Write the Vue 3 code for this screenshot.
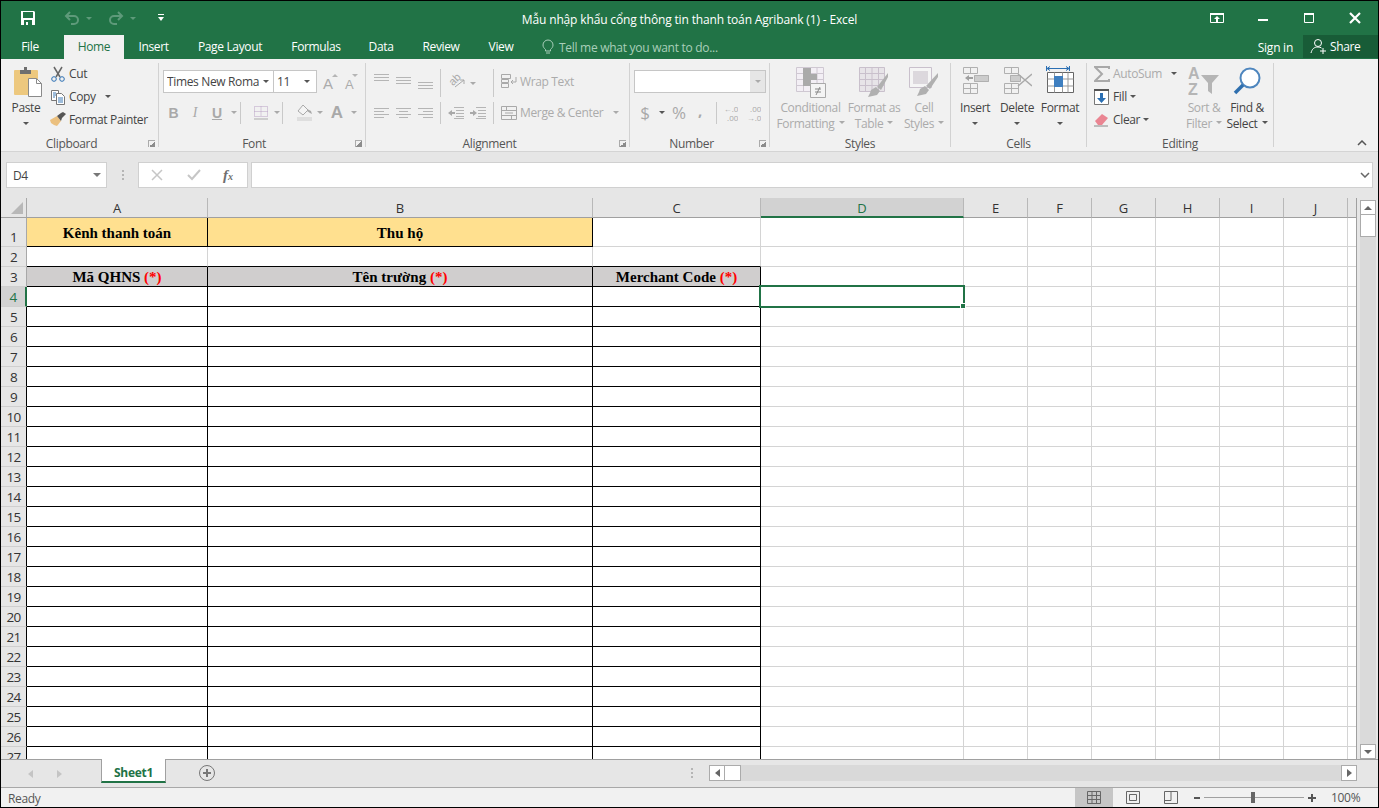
<script setup>
const colW = [181, 385, 168, 203, 64, 64, 64, 64, 64, 64, 8]
const colNames = ['A', 'B', 'C', 'D', 'E', 'F', 'G', 'H', 'I', 'J', '']
const tabs = ['File', 'Home', 'Insert', 'Page Layout', 'Formulas', 'Data', 'Review', 'View']
const gridCols = colW.map(w => w + 'px').join(' ')

const rows = Array.from({ length: 27 }, (_, i) => i + 1)

function cellClass(r, c) {
  const cls = []
  if (r === 1 && c < 2) cls.push('fill-y', 'blk-r', 'blk-b', 'title-cell')
  if (r === 2 && c < 3) cls.push('blk-b')
  if (r >= 3 && c < 3) cls.push('blk-r', 'blk-b')
  if (r === 3 && c < 3) cls.push('fill-g', 'title-cell')
  return cls
}

const cellText = { '1-0': 'Kênh thanh toán', '1-1': 'Thu hộ', '3-0': 'Mã QHNS', '3-1': 'Tên trường', '3-2': 'Merchant Code' }
</script>

<template>
  <div class="win">
    <header class="titlebar">
      <div class="qat">
        <svg width="14" height="14" viewBox="0 0 14 14"><path fill="#fff" d="M0 0h13l1 1v13H0z"/><path fill="#217346" d="M2 1h10v6H2zM3 9h8v5H3z"/><path fill="#fff" d="M5 11h2v3H5z"/></svg>
        <svg class="q-undo" width="16" height="14" viewBox="0 0 16 14"><path d="M6 1L2 5l4 4M2 5h8a4 4 0 0 1 0 8H7" fill="none" stroke="#5e9a7a" stroke-width="2"/></svg>
        <i class="caret dim-caret q-c1"></i>
        <svg class="q-redo" width="16" height="14" viewBox="0 0 16 14"><path d="M10 1l4 4-4 4M14 5H6a4 4 0 0 0 0 8h3" fill="none" stroke="#5e9a7a" stroke-width="2"/></svg>
        <i class="caret dim-caret q-c2"></i>
        <svg class="q-more" width="8" height="8" viewBox="0 0 8 8"><path d="M1 0h6v1H1z M1 3h6L4 7z" fill="#fff"/></svg>
      </div>
      <div class="doc-title">Mẫu nhập khẩu cổng thông tin thanh toán Agribank (1) - Excel</div>
      <div class="winctl">
        <svg width="46" height="34" viewBox="0 0 46 34"><path d="M16.500 12.500h13v9h-13z" fill="none" stroke="#fff"/><path d="M16 12h14v2H16z M23 15l-3 3h2v3h2v-3h2z" fill="#fff"/></svg>
        <svg width="46" height="34" viewBox="0 0 46 34"><path d="M18 18h10v2H18z" fill="#fff"/></svg>
        <svg width="46" height="34" viewBox="0 0 46 34"><path d="M18.500 13.500h9v8h-9z" fill="none" stroke="#fff"/><path d="M18 12h10v2H18z" fill="#fff"/></svg>
        <svg width="46" height="34" viewBox="0 0 46 34"><path d="M18 12l10 10M28 12L18 22" stroke="#fff" stroke-width="2.200" fill="none"/></svg>
      </div>
    </header>

    <nav class="tabs">
      <div v-for="t in tabs" :key="t" class="tab" :class="{ active: t === 'Home', file: t === 'File' }">{{ t }}</div>
      <div class="tellme">
        <svg width="12" height="16" viewBox="0 0 12 16"><path d="M3.500 10.500C2 9 1 8 1 6a5 5 0 0 1 10 0c0 2-1 3-2.500 4.500v1.500h-5zM4 14h4" fill="none" stroke="#a9cfba"/></svg>
        <span>Tell me what you want to do...</span>
      </div>
      <div class="signin">Sign in</div>
      <div class="share">
        <svg width="18" height="17" viewBox="0 0 18 17"><circle cx="8" cy="5" r="3.500" fill="none" stroke="#fff"/><path d="M1 15c1-4 3-6 7-6 1.500 0 2.500.3 3.500 1" fill="none" stroke="#fff"/><path d="M10 13h6M13 10v6" stroke="#fff"/></svg>
        <span>Share</span>
      </div>
    </nav>

    <section class="ribbon">
      <!-- Clipboard -->
      <div class="group g-clip">
        <div class="g-body g-flex">
          <div class="big paste">
            <svg width="32" height="32" viewBox="0 0 32 32"><path fill="#edc87e" d="M5 4h22a1 1 0 0 1 1 1v24H5a1 1 0 0 1-1-1V5a1 1 0 0 1 1-1z"/><path fill="#6f6f6f" d="M10 4h4V1h3v3h4v4H10z"/><path fill="#fff" stroke="#8a8a8a" d="M18.500 12.500h8l5 5v13h-13z"/><path fill="none" stroke="#8a8a8a" d="M26.500 12.500v5h5"/></svg>
            <span class="t">Paste</span>
            <i class="caret"></i>
          </div>
          <div class="stack">
            <div class="srow">
              <span class="slot"><svg width="16" height="16" viewBox="0 0 16 16"><path d="M4 1l6 10M12 1L6 11" stroke="#666" stroke-width="1.500" fill="none"/><circle cx="4" cy="13" r="2.300" fill="none" stroke="#2b6fb3"/><circle cx="12" cy="13" r="2.300" fill="none" stroke="#2b6fb3"/></svg></span>
              <span>Cut</span>
            </div>
            <div class="srow">
              <span class="slot"><svg width="16" height="16" viewBox="0 0 16 16"><path d="M1.500 1.500h7v10h-7z" fill="#fff" stroke="#777"/><path d="M6.500 4.500h5l3 3v8h-8z" fill="#fff" stroke="#777"/><path d="M3 4h3M3 6h3M3 8h2M8 9h5M8 11h5M8 13h5" stroke="#3b78b5"/></svg></span>
              <span>Copy</span><i class="caret m12"></i>
            </div>
            <div class="srow">
              <span class="slot"><svg width="16" height="15" viewBox="0 0 16 15"><path d="M0 8l7-4 4 5-4 5-3-1-3-2z" fill="#ebc07f"/><path d="M7 4l4-3 2-1 3 2-4 4-1 3z" fill="#555"/></svg></span>
              <span class="fp">Format Painter</span>
            </div>
          </div>
        </div>
        <div class="g-label pad">Clipboard<i class="launch"></i></div>
      </div>

      <!-- Font -->
      <div class="group g-font">
        <div class="g-body g-col">
          <div class="r1 font-r1">
            <div class="combo font-name"><span class="val">Times New Roma</span><i class="caret"></i></div>
            <div class="combo font-size"><span class="val">11</span><i class="caret"></i></div>
            <span class="g-a big-a">A<i class="tri up"></i></span>
            <span class="g-a small-a">A<i class="tri down"></i></span>
          </div>
          <div class="r2 font-r2">
            <b class="glyph">B</b>
            <i class="glyph it">I</i>
            <u class="glyph und">U</u>
            <i class="caret off"></i>
            <span class="vsep"></span>
            <svg width="14" height="14" viewBox="0 0 14 14"><path d="M.5.500h13v10H.500zM7 .5v10M.5 5.500h13" fill="none" stroke="#b9a0c4" stroke-dasharray="1 1"/><path d="M0 13h14" stroke="#a9a9a9"/></svg>
            <i class="caret off"></i>
            <span class="vsep"></span>
            <svg width="17" height="17" viewBox="0 0 17 17"><path d="M2 7l5-6 5 5-5 5z" fill="#f4f4f4" stroke="#a9a9a9"/><path d="M11 5l4 2 1 3-2-1-3-2z" fill="#a9a9a9"/><path d="M1 13h15v4H1z" fill="#dedede"/></svg>
            <i class="caret off"></i>
            <span class="color-a">A</span>
            <i class="caret off"></i>
          </div>
        </div>
        <div class="g-label pad">Font<i class="launch"></i></div>
      </div>

      <!-- Alignment -->
      <div class="group g-align">
        <div class="g-body g-col">
          <div class="r1 align-grid">
            <svg class="top-ic" width="15" height="20" viewBox="0 0 15 20"><path d="M0 1.500h15M0 4.500h15M0 7.500h15" stroke="#b5b5b5"/></svg>
            <svg class="top-ic" width="15" height="20" viewBox="0 0 15 20"><path d="M0 4.500h15M0 7.500h15M0 10.500h15" stroke="#b5b5b5"/></svg>
            <svg class="top-ic" width="15" height="20" viewBox="0 0 15 20"><path d="M0 9.500h15M0 12.500h15M0 15.500h15" stroke="#b5b5b5"/></svg>
            <span class="vsep tall"></span>
            <span class="flexcell"><svg class="orient" width="18" height="17" viewBox="0 0 18 17"><text x="1" y="11" transform="rotate(-45 7 8)" class="ab">ab</text><path d="M7 15l9-7M16 8h-4M16 8v4" stroke="#a9a9a9" fill="none"/></svg><i class="caret off ml"></i></span>
            <span></span>
            <span class="vsep tall"></span>
            <span class="flexcell off-t up2"><svg class="s-ic" width="16" height="16" viewBox="0 0 16 16"><path d="M.5 1.500h9v4h-9zM.5 6.500h7v3h-7zM.5 10.500h7v4h-7z" fill="none" stroke="#a9a9a9"/><path d="M15 4v5H10M12 7l-2 2 2 2" fill="none" stroke="#a9a9a9"/></svg>Wrap Text</span>
          </div>
          <div class="r2 align-grid">
            <svg width="15" height="12" viewBox="0 0 15 12"><path d="M0 1.500h15M0 4.500h10M0 7.500h15M0 10.500h10" stroke="#b5b5b5"/></svg>
            <svg width="15" height="12" viewBox="0 0 15 12"><path d="M0 1.500h15M3 4.500h9M0 7.500h15M3 10.500h9" stroke="#b5b5b5"/></svg>
            <svg width="15" height="12" viewBox="0 0 15 12"><path d="M0 1.500h15M5 4.500h10M0 7.500h15M5 10.500h10" stroke="#b5b5b5"/></svg>
            <span class="vsep"></span>
            <svg width="16" height="14" viewBox="0 0 16 14"><path d="M6 1.500h10M8 4.500h8M8 7.500h8M8 10.500h8M6 12.500h10" stroke="#b5b5b5"/><path d="M0 7l4-3v2h3v2H4v2z" fill="#a9a9a9"/></svg>
            <svg width="16" height="14" viewBox="0 0 16 14"><path d="M6 1.500h10M8 4.500h8M8 7.500h8M8 10.500h8M6 12.500h10" stroke="#b5b5b5"/><path d="M7 7L3 4v2H0v2h3v2z" fill="#a9a9a9"/></svg>
            <span class="vsep"></span>
            <span class="flexcell off-t"><svg class="s-ic" width="16" height="16" viewBox="0 0 16 16"><path d="M.5 1.500h15v13H.5zM.5 5.500h15M.5 10.500h15M5.500 1.500v4M10.500 10.500v4M4 8h8" fill="none" stroke="#a9a9a9"/></svg>Merge &amp; Center<i class="caret off ml2"></i></span>
          </div>
        </div>
        <div class="g-label pad">Alignment<i class="launch"></i></div>
      </div>

      <!-- Number -->
      <div class="group g-num">
        <div class="g-body g-col">
          <div class="r1"><div class="combo num-combo"><span class="val"></span><span class="num-btn"><i class="caret off"></i></span></div></div>
          <div class="r2 num-r2">
            <span class="n-dollar">$</span>
            <i class="caret"></i>
            <span class="n-pct">%</span>
            <span class="n-comma">,</span>
            <span></span>
            <span class="vsep start"></span>
            <span class="n-dec"><span>←.0</span><span>.00</span></span>
            <span class="n-dec"><span>.00</span><span>→.0</span></span>
          </div>
        </div>
        <div class="g-label pad">Number<i class="launch"></i></div>
      </div>

      <!-- Styles -->
      <div class="group g-styles">
        <div class="g-body g-flex">
          <div class="big off-t w65">
            <svg width="30" height="32" viewBox="0 0 30 32"><path d="M.5 1.500h27v24H.500zM7.500 1.500v24M14.500 1.500v24M21 1.500v24M.5 7.500h27M.5 13.500h27M.5 19.500h27" fill="#f3eff5" stroke="#cfc8d2"/><path d="M7 2h8v6H7zM7 8h14v6H7zM7 14h8v6H7z" fill="#aaa"/><path d="M14.500 17.500h15v14h-15z" fill="#f4f4f4" stroke="#a9a9a9"/><path d="M19 23h6M19 26h6M24 21l-4 8" stroke="#888" fill="none"/></svg>
            <span class="t">Conditional</span>
            <span class="t">Formatting<i class="caret off ml"></i></span>
          </div>
          <div class="big off-t w62">
            <svg width="30" height="32" viewBox="0 0 30 32"><path d="M.5 1.500h25v24H.5zM.5 7.500h25M.5 13.500h25M.5 19.500h25M6.500 1.500v24M13 1.500v24M19.500 1.500v24" fill="#e7e4e8" stroke="#c9c0cc"/><path d="M29 7v4l-7 13-4-3z" fill="#b0b0b0"/><path d="M12 24l5-3 4 4-3 4-9 2 2-4z" fill="#b0b0b0"/></svg>
            <span class="t">Format as</span>
            <span class="t">Table<i class="caret off ml"></i></span>
          </div>
          <div class="big off-t w38">
            <svg width="30" height="32" viewBox="0 0 30 32"><path d="M.5 1.500h22v20H.500z" fill="#f5f5f5" stroke="#c9c0cc"/><path d="M4 5h15v13H4z" fill="#dcd8dd"/><path d="M29 7v4l-8 12-4-3z" fill="#b0b0b0"/><path d="M11 23l5-3 4 4-3 4-9 2 2-4z" fill="#b0b0b0"/></svg>
            <span class="t">Cell</span>
            <span class="t">Styles<i class="caret off ml"></i></span>
          </div>
        </div>
        <div class="g-label">Styles</div>
      </div>

      <!-- Cells -->
      <div class="group g-cells">
        <div class="g-body g-flex">
          <div class="big w42">
            <svg width="30" height="32" viewBox="0 0 30 32"><path d="M14 9h15v7H14z" fill="#ccc"/><path d="M3.500 1.500h14v6h-14zM10.500 1.500v6M14.500 9.500h14v6h-14zM3.500 17.500h14v10h-14zM3.500 22.500h14M10.500 17.500v10" fill="none" stroke="#b0b0b0"/><path d="M5 12l4-3v2h4v2H9v2z" fill="#a0a0a0"/></svg>
            <span class="t">Insert</span>
            <i class="caret"></i>
          </div>
          <div class="big w42">
            <svg width="30" height="32" viewBox="0 0 30 32"><path d="M8 9h10v7H8z" fill="#ccc"/><path d="M2.500 1.500h14v6h-14zM9.500 1.500v6M8.500 9.500h10v6h-10zM2.500 17.500h14v10h-14zM2.500 22.500h14M9.500 17.500v10" fill="none" stroke="#b0b0b0"/><path d="M16 8l14 12M30 8L16 20" stroke="#aaa" stroke-width="1.500" fill="none"/></svg>
            <span class="t">Delete</span>
            <i class="caret"></i>
          </div>
          <div class="big w44">
            <svg width="30" height="32" viewBox="0 0 30 32"><path d="M1.500 0v5M24.500 0v5" stroke="#2b6fb3"/><path d="M2 2.500h22M5 .5l-3 2 3 2M21 .5l3 2-3 2" stroke="#2b6fb3" fill="none"/><path d="M2.500 6.500h26v20h-26z" fill="#fff" stroke="#666"/><path d="M2.500 13h26M2.500 20h26M9.500 6.500v20M17.500 6.500v20M23 6.500v20" stroke="#999"/><path d="M9 10h9v11H9z" fill="#3f7fc0"/></svg>
            <span class="t">Format</span>
            <i class="caret"></i>
          </div>
        </div>
        <div class="g-label">Cells</div>
      </div>

      <!-- Editing -->
      <div class="group g-edit">
        <div class="g-body g-flex">
          <div class="stack edit-stack">
            <div class="srow off-t">
              <span class="slot"><svg width="16" height="16" viewBox="0 0 16 16"><path d="M15 3V1H1l7 7-7 7h14v-2" fill="none" stroke="#a9a9a9" stroke-width="2"/></svg></span>
              <span>AutoSum</span><i class="caret m12"></i>
            </div>
            <div class="srow">
              <span class="slot"><svg width="15" height="16" viewBox="0 0 15 16"><path d="M.5.500h14v15H.500z" fill="#fff" stroke="#777"/><path d="M0 0h15v2H0z" fill="#555"/><path d="M6 4h3v5h3l-4.500 5L3 9h3z" fill="#2b6fb3"/></svg></span>
              <span>Fill</span><i class="caret m4"></i>
            </div>
            <div class="srow">
              <span class="slot"><svg width="16" height="15" viewBox="0 0 16 15"><path d="M1 9l7-7 6 4-6 7H4z" fill="#ea8592"/><path d="M0 14h14" stroke="#888"/></svg></span>
              <span>Clear</span><i class="caret m4"></i>
            </div>
          </div>
          <div class="big off-t w36">
            <svg width="32" height="32" viewBox="0 0 32 32"><text x="0" y="13" class="az">A</text><text x="0" y="29" class="az">Z</text><path d="M13 9h18l-7 8v11l-4-3v-8z" fill="#b5b5b5"/></svg>
            <span class="t">Sort &amp;</span>
            <span class="t">Filter<i class="caret off ml"></i></span>
          </div>
          <div class="big w44b">
            <svg width="30" height="32" viewBox="0 0 30 32"><circle cx="18" cy="12" r="9.500" fill="#fff" stroke="#4e86be" stroke-width="2"/><path d="M11 19L3 27" stroke="#2f6fae" stroke-width="3.500"/></svg>
            <span class="t">Find &amp;</span>
            <span class="t">Select<i class="caret ml"></i></span>
          </div>
        </div>
        <div class="g-label">Editing</div>
      </div>

      <div class="collapse">
        <svg width="10" height="6" viewBox="0 0 10 6"><path d="M1 5l4-4 4 4" fill="none" stroke="#555" stroke-width="1.500"/></svg>
      </div>
    </section>

    <section class="formula">
      <div class="namebox"><span>D4</span><i class="caret"></i></div>
      <div class="dots"><i></i><i></i><i></i></div>
      <div class="fx-box">
        <svg width="12" height="12" viewBox="0 0 12 12"><path d="M1 1l10 10M11 1L1 11" stroke="#c6c6c6" stroke-width="1.500"/></svg>
        <svg width="14" height="12" viewBox="0 0 14 12"><path d="M1 6l4 4 8-9" fill="none" stroke="#c6c6c6" stroke-width="2"/></svg>
        <span class="fx">f<small>x</small></span>
      </div>
      <div class="f-input">
        <svg width="10" height="6" viewBox="0 0 10 6"><path d="M1 1l4 4 4-4" fill="none" stroke="#666" stroke-width="1.500"/></svg>
      </div>
    </section>

    <main class="sheet">
      <div class="grid-wrap">
        <div class="head-row">
          <div class="corner"><i></i></div>
          <div class="col-heads" :style="{ gridTemplateColumns: gridCols }">
            <div v-for="(n, i) in colNames" :key="i" class="ch" :class="{ sel: n === 'D' }">{{ n }}</div>
          </div>
        </div>
        <div class="body">
          <div v-for="r in rows" :key="r" class="row" :class="{ tall: r === 1 }">
            <div class="rh" :class="{ sel: r === 4, edge: r >= 5 }">{{ r }}</div>
            <div class="cells" :style="{ gridTemplateColumns: gridCols }">
              <div v-for="(w, c) in colW" :key="c" class="cell" :class="cellClass(r, c)">
                <template v-if="cellText[r + '-' + c]">{{ cellText[r + '-' + c] }}<span v-if="r === 3" class="req"> (*)</span></template>
              </div>
            </div>
          </div>
          <div class="selection"><i></i></div>
        </div>
      </div>
      <aside class="vscroll">
        <div class="sbtn"><i class="caret"></i></div>
        <div class="vthumb"></div>
        <div class="vtrack"></div>
        <div class="sbtn"><i class="caret"></i></div>
      </aside>
    </main>

    <section class="tabbar">
      <div class="nav-arrows">
        <i class="arr l"></i>
        <i class="arr r"></i>
      </div>
      <div class="sheet-tab">Sheet1</div>
      <div class="add">
        <svg width="16" height="16" viewBox="0 0 16 16"><circle cx="8" cy="8" r="7.500" fill="none" stroke="#777"/><path d="M4 8h8M8 4v8" stroke="#777" stroke-width="2"/></svg>
      </div>
      <div class="dots h"><i></i><i></i><i></i></div>
      <div class="hscroll">
        <div class="sbtn2"><i class="arr l dark"></i></div>
        <div class="hthumb"></div>
        <div class="htrack"></div>
        <div class="sbtn2"><i class="arr r dark"></i></div>
      </div>
    </section>

    <footer class="status">
      <span class="ready">Ready</span>
      <div class="views">
        <div class="vbtn on"><svg width="14" height="13" viewBox="0 0 14 13"><path d="M.5.500h13v12H.500zM5 .5v12M9.500.5v12M.5 4.500h13M.5 8.500h13" fill="none" stroke="#666"/></svg></div>
        <div class="vbtn"><svg width="14" height="13" viewBox="0 0 14 13"><path d="M.5.500h13v12H.500zM3.500 3.500h7v6h-7z" fill="none" stroke="#666"/></svg></div>
        <div class="vbtn"><svg width="14" height="13" viewBox="0 0 14 13"><path d="M.5.500h13v12H.500zM.5 9.500h6.500V.5" fill="none" stroke="#666"/></svg></div>
      </div>
      <div class="zoomer">
        <i class="minus"></i>
        <div class="slider"><i></i></div>
        <i class="plus"></i>
      </div>
      <span class="pct">100%</span>
    </footer>
  </div>
</template>

<style>
html, body { margin: 0; padding: 0; background: #000; }
</style>

<style scoped>
* { box-sizing: border-box; }
.win {
  width: 1379px; height: 808px; border: 1px solid #000; display: flex; flex-direction: column; overflow: hidden;
  font-family: "Open Sans", "Noto Sans", sans-serif; font-size: 12px; letter-spacing: -0.35px; color: #444; background: #e6e6e6;
}
i { font-style: normal; display: inline-block; }
svg { display: block; flex: none; }

.caret { width: 0; height: 0; border-left: 3px solid transparent; border-right: 3px solid transparent; border-top: 3px solid #555; flex: none; }
.caret.off { border-top-color: #aaa; }
.caret.ml { margin-left: 4px; vertical-align: middle; }
.caret.ml2 { margin-left: 10px; }
.caret.m12 { margin-left: 9px; }
.caret.m4 { margin-left: 3px; }

.titlebar { height: 34px; flex: none; background: #217346; position: relative; display: flex; align-items: center; }
.qat { display: flex; align-items: center; padding-left: 20px; }
.q-undo { margin-left: 29px; }
.q-c1 { margin-left: 6px; }
.dim-caret { border-top-color: #5e9a7a; }
.q-redo { margin-left: 16px; }
.q-c2 { margin-left: 6px; }
.q-more { margin-left: 21px; }
.doc-title { position: absolute; left: 0; right: 0; top: 0; line-height: 37px; text-align: center; color: #fff; letter-spacing: -0.15px; pointer-events: none; }
.winctl { margin-left: auto; display: flex; }

.tabs { height: 24px; flex: none; background: #217346; display: grid; grid-template-columns: 63px 60px 59px 94px 78px 52px 68px 52px 1fr auto auto; color: #fff; align-items: center; }
.tab { text-align: center; line-height: 24px; height: 24px; letter-spacing: -0.35px; }
.tab.file { padding-right: 5px; }
.tab.active { background: #f1f1f1; color: #217346; }
.tellme { display: flex; align-items: center; gap: 5px; color: #a9cfba; padding-left: 15px; letter-spacing: -0.28px; }
.signin { padding-right: 10px; letter-spacing: -0.25px; }
.share { width: 75px; height: 23px; align-self: start; background: #185c37; display: flex; align-items: center; gap: 2px; padding-left: 7px; }

.ribbon { height: 93px; flex: none; background: #f1f1f1; border-bottom: 1px solid #d4d4d4; display: flex; padding-top: 4px; position: relative; }
.group { height: 84px; border-right: 1px solid #d2d2d2; flex: none; position: relative; }
.g-clip { width: 158px; }
.g-font { width: 207px; }
.g-align { width: 264px; }
.g-num { width: 140px; }
.g-styles { width: 181px; }
.g-cells { width: 136px; }
.g-edit { width: 187px; }
.g-body { height: 72px; }
.g-flex { display: flex; align-items: flex-start; }
.g-col { display: flex; flex-direction: column; padding-top: 6px; }
.g-label { height: 16px; line-height: 17px; text-align: center; color: #555; position: relative; }
.g-label.pad { padding-right: 16px; }
.launch { position: absolute; right: 3px; top: 5px; width: 7px; height: 7px; border-left: 1px solid #ababab; border-top: 1px solid #ababab; background: linear-gradient(135deg, transparent 50%, #8c8c8c 50%); }

.big { display: flex; flex-direction: column; align-items: center; padding-top: 3px; flex: none; }
.big > svg { margin-bottom: 2px; height: 32px; }
.big .t { line-height: 16px; height: 16px; white-space: nowrap; }
.big > .caret { margin-top: 6px; }
.big .t .caret { position: relative; top: -2px; }
.off-t { color: #ababab; }
.w65 { width: 65px; } .w62 { width: 62px; } .w38 { width: 38px; }
.w42 { width: 42px; } .w44 { width: 44px; } .w36 { width: 36px; } .w44b { width: 44px; margin-left: 3px; }

.paste { width: 40px; margin-left: 5px; padding-top: 3px; }
.stack { display: flex; flex-direction: column; margin-left: 4px; margin-top: -1px; }
.srow { height: 23px; display: flex; align-items: center; white-space: nowrap; }
.slot { width: 19px; flex: none; display: flex; }
.g-edit .stack { width: 92px; margin-left: 7px; }

.r1 { height: 28px; flex: none; }
.r2 { height: 23px; margin-top: 4px; flex: none; align-items: center; }
.vsep { width: 1px; height: 22px; background: #c9c9c9; justify-self: start; display: block; }
.vsep.tall { height: 28px; }

.font-r1 { display: flex; padding: 1px 0 0 4px; }
.combo { height: 23px; background: #fff; border: 1px solid #c6c6c6; display: flex; align-items: center; padding: 0 4px 0 3px; justify-content: space-between; }
.combo .val { white-space: nowrap; overflow: hidden; color: #444; }
.font-name { width: 111px; }
.font-name .val { width: 92px; }
.font-size { width: 44px; margin-left: -1px; padding-right: 6px; }
.g-a { position: relative; color: #ababab; font-family: "Liberation Sans", sans-serif; font-weight: 400; letter-spacing: 0; display: flex; align-items: flex-end; height: 22px; }
.big-a { font-size: 15px; margin-left: 6px; width: 22px; }
.small-a { font-size: 13px; width: 14px; }
.tri { position: absolute; left: 9px; top: 4px; width: 0; height: 0; border-left: 3px solid transparent; border-right: 3px solid transparent; }
.tri.up { border-bottom: 3px solid #b5b5b5; }
.tri.down { border-top: 3px solid #b5b5b5; left: 7px; }

.font-r2 { display: grid; grid-template-columns: 21px 22px 22px 12px 10px 22px 10px 12px 20px 12px 22px 12px; margin-left: 4px; justify-items: center; }
.glyph { font-family: "Liberation Sans", sans-serif; font-size: 14px; color: #a9a9a9; letter-spacing: 0; }
.glyph.it { font-family: "Liberation Serif", serif; font-style: italic; font-weight: 400; }
.und { font-weight: 700; }
.color-a { font-family: "Liberation Sans", sans-serif; font-size: 17px; font-weight: 700; color: #a9a9a9; letter-spacing: 0; }

.align-grid { display: grid; grid-template-columns: 22px 22px 22px 8px 22px 23px 8px 1fr; margin-left: 8px; align-items: center; }
.top-ic { align-self: start; margin-top: 4px; }
.flexcell { display: flex; align-items: center; white-space: nowrap; }
.up2 { margin-top: -4px; }
.orient { margin-top: -6px; overflow: visible; }
.ab { font: 11px "Liberation Sans", sans-serif; fill: #a9a9a9; letter-spacing: 0; }
.s-ic { margin-right: 3px; }

.num-combo { width: 132px; margin: 1px 0 0 4px; padding: 0; }
.num-btn { width: 15px; height: 21px; background: #e6e6e6; display: flex; align-items: center; justify-content: center; }
.num-r2 { display: grid; grid-template-columns: 22px 11px 24px 18px 7px 4px 22px 24px; margin-left: 4px; justify-items: center; color: #a9a9a9; }
.n-dollar { font-size: 17px; letter-spacing: 0; }
.n-pct { font-size: 17px; letter-spacing: 0; }
.n-comma { font-size: 15px; font-weight: 700; margin-top: -6px; }
.n-dec { display: flex; flex-direction: column; font-size: 8px; line-height: 9px; align-items: flex-end; letter-spacing: 0; }
.n-dec span { height: 9px; overflow: hidden; display: block; }
.g-styles .g-flex { padding-left: 8px; }
.g-cells .g-flex { padding-left: 3px; }
.az { font: 700 16px "Liberation Sans", sans-serif; fill: #b5b5b5; letter-spacing: 0; }

.collapse { position: absolute; right: 11px; top: 81px; }

.formula { height: 46px; flex: none; display: flex; padding: 10px 5px 0 5px; background: #e6e6e6; }
.namebox { width: 101px; height: 26px; background: #fff; border: 1px solid #d0d0d0; display: flex; align-items: center; justify-content: space-between; padding: 0 5px 0 6px; }
.namebox .caret { border-left-width: 4px; border-right-width: 4px; border-top-width: 4px; border-top-color: #777; }
.dots { width: 31px; height: 26px; display: flex; flex-direction: column; align-items: center; justify-content: center; gap: 2px; }
.dots i { width: 2px; height: 2px; background: #b5b5b5; }
.fx-box { width: 110px; height: 26px; background: #fff; border: 1px solid #d0d0d0; display: flex; align-items: center; padding: 0 0 0 12px; gap: 24px; }
.fx { font: italic 700 15px "Liberation Serif", serif; color: #6f6f6f; letter-spacing: 0; margin-left: -2px; }
.fx small { font-size: 10px; }
.f-input { flex: 1; height: 26px; margin-left: 3px; background: #fff; border: 1px solid #d0d0d0; display: flex; align-items: center; justify-content: flex-end; padding-right: 2px; }

.sheet { flex: 1; min-height: 0; display: flex; overflow: hidden; }
.grid-wrap { width: 1356px; border-right: 1px solid #a0a0a0; overflow: hidden; flex: none; background: #fff; }
.head-row { display: flex; height: 20px; background: #e6e6e6; }
.corner { width: 26px; flex: none; border-right: 1px solid #a8a8a8; border-bottom: 1px solid #a0a0a0; position: relative; }
.corner i { position: absolute; right: 3px; bottom: 3px; width: 0; height: 0; border-style: solid; border-width: 0 0 12px 12px; border-color: transparent transparent #b8b8b8 transparent; }
.col-heads { display: grid; }
.ch { height: 20px; text-align: center; line-height: 20px; border-right: 1px solid #b8b8b8; border-bottom: 1px solid #a0a0a0; font-size: 13px; letter-spacing: 0; color: #333; }
.ch:last-child { border-right: 0; }
.ch.sel { background: #d2d2d2; color: #217346; border-bottom: 2px solid #217346; }
.body { position: relative; }
.row { display: flex; height: 20px; }
.row.tall { height: 29px; }
.rh { width: 26px; flex: none; background: #e6e6e6; border-right: 1px solid #a8a8a8; border-bottom: 1px solid #cfcfcf; display: flex; align-items: flex-end; justify-content: center; line-height: 17px; font-size: 13.5px; letter-spacing: -0.8px; color: #333; }
.rh.edge { border-right-color: #000; }
.rh.sel { background: #d2d2d2; color: #217346; border-right: 2px solid #217346; }
.cells { display: grid; flex: none; }
.cell { border-right: 1px solid #d4d4d4; border-bottom: 1px solid #d4d4d4; min-width: 0; }
.cell:last-child { border-right: 0; }
.blk-r { border-right-color: #000; }
.blk-b { border-bottom-color: #000; }
.fill-y { background: #ffe08f; }
.fill-g { background: #d0cece; }
.title-cell { font: 700 15px "Liberation Serif", serif; color: #000; letter-spacing: 0; text-align: center; display: flex; align-items: center; justify-content: center; white-space: pre; padding-top: 2px; }
.req { color: #f00; }
.selection { position: absolute; left: 758px; top: 67px; width: 206px; height: 23px; border: 2px solid #217346; pointer-events: none; }
.selection i { position: absolute; right: -3px; bottom: -3px; background: #217346; border: 1px solid #fff; box-sizing: content-box; width: 4px; height: 4px; }

.vscroll { flex: 1; display: flex; flex-direction: column; padding: 2px 3px 0; }
.sbtn { height: 15px; flex: none; background: #fff; border: 1px solid #ababab; display: flex; align-items: center; justify-content: center; width: 16px; }
.sbtn:first-child .caret { transform: rotate(180deg); }
.vthumb { width: 16px; height: 23px; flex: none; background: #fff; border: 1px solid #ababab; margin-top: -1px; }
.vtrack { flex: 1; background: #dadada; width: 16px; }
.vscroll .sbtn .caret { border-top-color: #666; border-left-width: 4px; border-right-width: 4px; border-top-width: 4px; }

.tabbar { height: 29px; flex: none; border-top: 1px solid #a0a0a0; border-bottom: 1px solid #a8a8a8; background: #e6e6e6; display: flex; position: relative; }
.nav-arrows { width: 100px; padding-left: 27px; display: flex; align-items: center; gap: 24px; }
.arr { width: 0; height: 0; border-top: 4px solid transparent; border-bottom: 4px solid transparent; }
.arr.l { border-right: 5px solid #c4c4c4; }
.arr.r { border-left: 5px solid #c4c4c4; }
.arr.dark.l { border-right-color: #666; }
.arr.dark.r { border-left-color: #666; }
.sheet-tab { width: 65px; height: 24px; margin-top: -1px; background: #fff; border-left: 1px solid #a0a0a0; border-right: 1px solid #a0a0a0; border-bottom: 2px solid #217346; color: #217346; font-weight: 700; text-align: center; line-height: 27px; letter-spacing: -0.3px; }
.add { margin-left: 33px; align-self: center; margin-top: -2px; }
.tabbar .dots.h { position: absolute; left: 676px; top: 0; width: 30px; }
.hscroll { position: absolute; left: 708px; top: 5px; width: 648px; height: 16px; display: flex; }
.sbtn2 { width: 16px; height: 16px; flex: none; background: #fff; border: 1px solid #ababab; display: flex; align-items: center; justify-content: center; }
.hthumb { width: 17px; flex: none; background: #fff; border: 1px solid #ababab; margin-left: -1px; }
.htrack { flex: 1; background: #d9d9d9; }

.status { height: 19px; flex: none; background: #f1f1f1; display: flex; align-items: center; padding-left: 7px; }
.ready { color: #555; padding-top: 1px; }
.views { margin-left: auto; display: flex; height: 19px; margin-right: 4px; }
.vbtn { width: 38.300px; display: flex; align-items: center; justify-content: center; }
.vbtn.on { background: #c6c6c6; }
.zoomer { display: flex; align-items: center; width: 133px; flex: none; }
.minus { width: 6px; height: 2px; background: #555; flex: none; }
.slider { width: 100px; height: 1px; background: #a0a0a0; margin: 0 4px; position: relative; flex: none; }
.slider i { position: absolute; left: 47px; top: -5px; width: 4px; height: 11px; background: #666; }
.plus { width: 8px; height: 8px; flex: none; background: linear-gradient(#555, #555) center/100% 2px no-repeat, linear-gradient(#555, #555) center/2px 100% no-repeat; }
.pct { width: 51px; padding-left: 4px; letter-spacing: -0.3px; color: #555; flex: none; }
</style>
